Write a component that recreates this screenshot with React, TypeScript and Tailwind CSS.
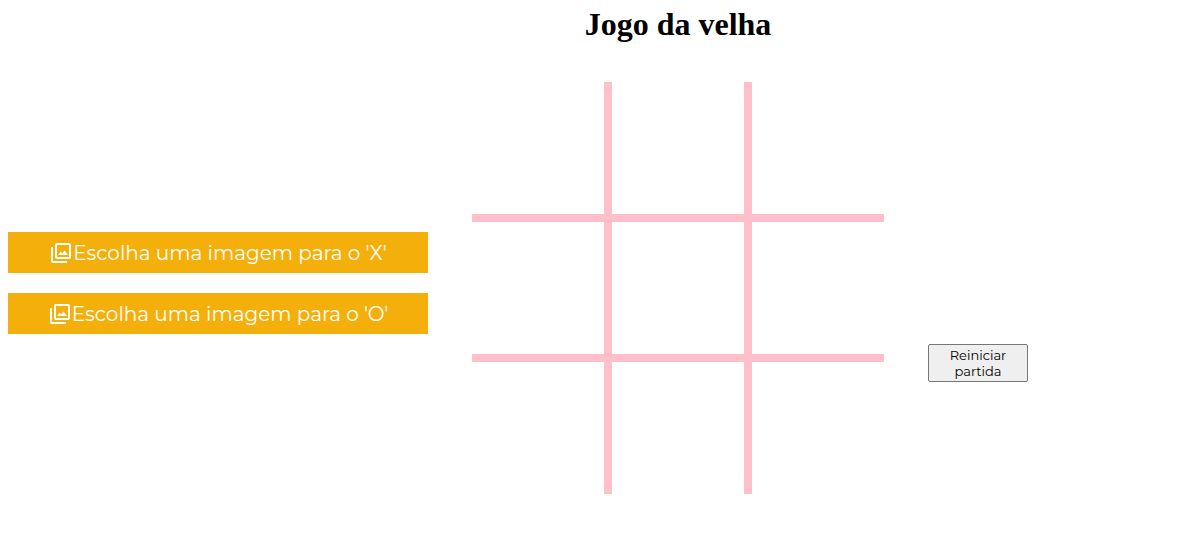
import { useState } from "react";

type Mark = "X" | "O";

function PhotoLibraryIcon() {
  return (
    <svg
      viewBox="0 -960 960 960"
      fill="currentColor"
      className="size-6 shrink-0"
      aria-hidden="true"
    >
      <path d="M360-400h400L622-580l-92 120-62-80-108 140Zm-40 160q-33 0-56.5-23.5T240-320v-480q0-33 23.5-56.5T320-880h480q33 0 56.5 23.5T880-800v480q0 33-23.5 56.5T800-240H320Zm0-80h480v-480H320v480ZM160-80q-33 0-56.5-23.5T80-160v-560h80v560h560v80H160Zm160-720v480-480Z" />
    </svg>
  );
}

function ImagePicker({ mark }: { mark: Mark }) {
  return (
    <label className="flex h-[41px] w-full cursor-pointer items-center justify-center bg-[#f5af0a] font-['Montserrat','Inter',sans-serif] text-[20px] text-white">
      <PhotoLibraryIcon />
      <span>Escolha uma imagem para o '{mark}'</span>
      <input type="file" accept="image/*" className="hidden" />
    </label>
  );
}

export default function App() {
  const [cells, setCells] = useState<(Mark | null)[]>(Array(9).fill(null));
  const turn: Mark = cells.filter(Boolean).length % 2 === 0 ? "X" : "O";

  const play = (index: number) => {
    if (cells[index]) return;
    setCells(cells.map((cell, i) => (i === index ? turn : cell)));
  };

  return (
    <main className="flex min-h-screen items-start gap-11 bg-white px-2 pt-1 text-black">
      <section className="mb-40 flex w-full max-w-[420px] flex-col gap-5 pt-57">
        <ImagePicker mark="X" />
        <ImagePicker mark="O" />
      </section>

      <section className="flex shrink-0 flex-col items-center gap-[38px]">
        <h1 className="font-['Liberation_Serif',serif] text-[32px] leading-10 font-bold">
          Jogo da velha
        </h1>
        <div className="grid grid-cols-3 gap-2 bg-[#ffc0cb]">
          {cells.map((cell, i) => (
            <button
              key={i}
              type="button"
              aria-label={`Casa ${i + 1}`}
              onClick={() => play(i)}
              className="size-33 bg-white font-['Liberation_Serif',serif] text-8xl"
            >
              {cell}
            </button>
          ))}
        </div>
      </section>

      <section className="shrink-0 pt-85">
        <button
          type="button"
          onClick={() => setCells(Array(9).fill(null))}
          className="w-25 rounded-xs border border-[#767676] bg-[#efefef] px-1.5 py-0.5 font-['Montserrat','Inter',sans-serif] text-[13px] leading-4"
        >
          Reiniciar partida
        </button>
      </section>
    </main>
  );
}
